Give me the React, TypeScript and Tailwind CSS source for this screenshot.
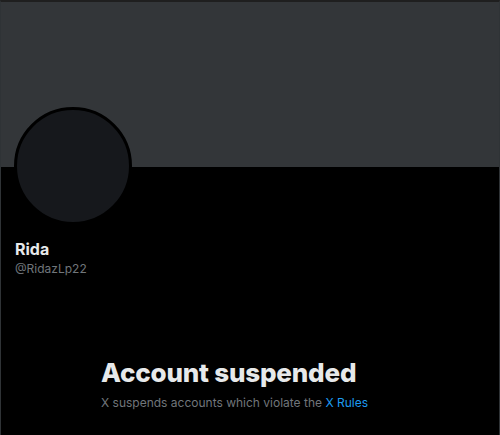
import React from "react";

export default function App() {
  return (
    <div
      className="w-[500px] h-[435px] bg-black overflow-hidden border-t-2 border-t-[#1f1f1f] border-x border-x-[#2f3336] flex flex-col"
      style={{ fontFamily: "Inter, 'Noto Sans', sans-serif" }}
    >
      <div className="h-[165px] bg-[#333639] shrink-0" />
      <div className="relative px-[14px]">
        <div className="absolute left-[13px] -top-[60px] w-[118px] h-[118px] rounded-full bg-[#16181c] border-[3px] border-black" />
        <div className="pt-[72px]">
          <div className="text-[16px] leading-[20px] font-bold text-[#e7e9ea]">Rida</div>
          <div className="text-[12px] leading-[16px] mt-[2px] text-[#71767b]">@RidazLp22</div>
        </div>
      </div>
      <div className="ml-[100px] mt-[80px]">
        <div className="text-[26px] leading-[32px] font-extrabold text-[#e7e9ea] tracking-[-0.2px]">Account suspended</div>
        <div className="text-[12px] leading-[16px] mt-[6px] text-[#71767b]">
          X suspends accounts which violate the <span className="text-[#1d9bf0]">X Rules</span>
        </div>
      </div>
    </div>
  );
}
